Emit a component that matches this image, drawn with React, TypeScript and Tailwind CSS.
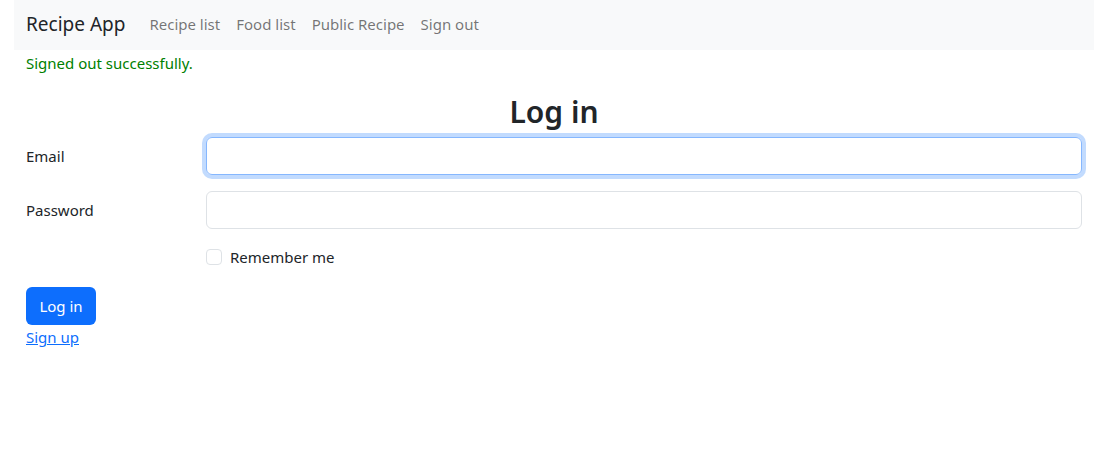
export default function App() {
  return (
    <div className="min-h-[467px] bg-white text-[#212529] font-['Noto_Sans',sans-serif] text-[15px]">
      <div className="mx-[14px] w-[1080px]">
        {/* Barra de navegación */}
        <nav className="h-[50px] bg-[#f8f9fa] px-3 flex items-center">
          <span className="text-[19px] mr-6 leading-[30px] -mt-0.5">Recipe App</span>
          <div className="flex gap-4 text-[rgba(0,0,0,0.55)] -mt-0.5">
            <a>Recipe list</a>
            <a>Food list</a>
            <a>Public Recipe</a>
            <a>Sign out</a>
          </div>
        </nav>

        <div className="px-3">
          <p className="text-[#008000] leading-6 mt-px">Signed out successfully.</p>

          <h2 className="text-center text-[30px] font-semibold leading-[38px] mt-[18px] mb-[6px] text-[#212529]">Log in</h2>

          <form>
            <div className="flex items-center mb-4">
              <label className="w-[180px]">Email</label>
              <input
                type="email"
                className="flex-1 h-[38px] rounded-md border border-[#86b7fe] shadow-[0_0_0_4px_rgba(13,110,253,0.25)] outline-none px-3"
              />
            </div>
            <div className="flex items-center mb-4">
              <label className="w-[180px]">Password</label>
              <input
                type="password"
                className="flex-1 h-[38px] rounded-md border border-[#dee2e6] outline-none px-3"
              />
            </div>
            <div className="flex items-center ml-[180px] h-6 mb-[18px]">
              <span className="w-4 h-4 rounded-[4px] border border-[#dee2e6] mr-2"></span>
              <span>Remember me</span>
            </div>
            <button type="button" className="h-[38px] w-[70px] rounded-md bg-[#0d6efd] text-white">
              Log in
            </button>
          </form>
          <a className="block text-[#0d6efd] underline leading-6">Sign up</a>
        </div>
      </div>
    </div>
  )
}
